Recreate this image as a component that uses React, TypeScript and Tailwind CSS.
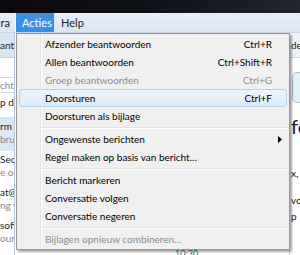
import { Fragment } from "react";

type Item = { label?: string; shortcut?: string; disabled?: boolean; active?: boolean; submenu?: boolean; sep?: boolean };

const items: Item[] = [
  { label: "Afzender beantwoorden", shortcut: "Ctrl+R" },
  { label: "Allen beantwoorden", shortcut: "Ctrl+Shift+R" },
  { label: "Groep beantwoorden", shortcut: "Ctrl+G", disabled: true },
  { label: "Doorsturen", shortcut: "Ctrl+F", active: true },
  { label: "Doorsturen als bijlage" },
  { sep: true },
  { label: "Ongewenste berichten", submenu: true },
  { label: "Regel maken op basis van bericht..." },
  { sep: true },
  { label: "Bericht markeren" },
  { label: "Conversatie volgen" },
  { label: "Conversatie negeren" },
  { sep: true },
  { label: "Bijlagen opnieuw combineren...", disabled: true },
];

const mails = [
  { from: "rm", sub: "brua", sel: true },
  { from: "Sec", sub: "e op" },
  { from: "at@", sub: "ng v" },
  { from: "soft", sub: "our" },
  { from: "t@", sub: "" },
];

const App = () => {
  return (
    <div className="relative w-[300px] h-[255px] overflow-hidden bg-white text-[10px] text-[#1a1a1a] font-['Lato',sans-serif]">
      {/* window title strip */}
      <div className="h-[13px] bg-gradient-to-r from-[#0a0a0e] via-[#101018] to-[#24242c]" />

      {/* menu bar */}
      <div className="h-[20px] flex bg-gradient-to-b from-[#e6eef8] to-[#dbe6f3] border-b border-[#c9d6e6] text-[11px]">
        <div className="w-[16px] overflow-hidden border-r border-[#f6f9fd] flex items-center justify-end pr-[5px] leading-none">ra</div>
        <div className="w-[38px] bg-[#3b8fe2] text-white flex items-center pl-[6px] leading-none">Acties</div>
        <div className="flex items-center pl-[7px] leading-none">Help</div>
      </div>

      {/* page body under the menu */}
      <div className="flex h-[222px]">
        <div className="w-[15px] border-r border-[#b7c7da] overflow-hidden whitespace-nowrap">
          <div className="h-[25px] bg-[#dbe6f3] border-b border-[#c3d2e4] flex items-center">antwoorden</div>
          <div className="h-[19px]" />
          <div className="h-[16px] border-y border-[#cfd9e6] flex items-center text-[#8a8a8a]">cht</div>
          <div className="h-[18px] flex items-center">p datum</div>
          <div className="h-[7px] border-b border-[#d6dde6]" />
          {mails.map((m, i) => (
            <div key={i} className={`h-[33px] flex flex-col pt-[2px] leading-[13px] ${m.sel ? "bg-[#dde8f5]" : ""}`}>
              <div>{m.from}</div>
              <div className="text-[#8a8a8a]">{m.sub}</div>
            </div>
          ))}
        </div>
        <div className="flex-1 relative">
          <div className="absolute left-[160px] bottom-[-5px] text-[9px] text-[#666]">10:30</div>
        </div>
        <div className="w-[11px] border-l border-[#c6d1de] overflow-hidden whitespace-nowrap">
          <div className="h-[25px] bg-[#eef3f9] border-b border-[#cdd8e5] flex items-center pl-[1px]">de</div>
          <div className="h-[14px]" />
          <div className="ml-[2px] h-[31px] w-[20px] rounded-[5px] border border-[#9fc2d8] bg-[#e4eff6]" />
          <div className="text-[20px] leading-[28px] pl-[1px] mt-[9px]">fe</div>
          <div className="mt-[25px] pl-[1px] leading-[16px]">x,</div>
          <div className="mt-[11px] pl-[1px] leading-[16px]">vo</div>
          <div className="pl-[1px] leading-[16px]">p</div>
        </div>
      </div>

      {/* dropdown */}
      <div className="absolute left-[16px] top-[33px] w-[274px] border border-[#979797] bg-[#f0f0f0] py-[1px] shadow-[2px_2px_2px_rgba(0,0,0,0.35)]">
        <div className="absolute left-[23px] top-0 bottom-0 w-px bg-[#e2e3e3]" />
        <div className="absolute left-[24px] top-0 bottom-0 w-px bg-white" />
        {items.map((it, i) =>
          it.sep ? (
            <div key={i} className="h-[5px] flex flex-col justify-center pl-[25px] pr-[1px]">
              <div className="h-px bg-[#e0e0e0]" />
              <div className="h-px bg-white" />
            </div>
          ) : (
            <Fragment key={i}>
              <div
                className={`relative h-[18px] mx-[2px] flex items-center pl-[25px] pr-[14px] rounded-[3px] border ${
                  it.active ? "border-[#b3d3ea] bg-gradient-to-b from-[#eef5fb] to-[#dcebf7]" : "border-transparent"
                } ${it.disabled ? "text-[#8d8d8d]" : "text-black"}`}
              >
                <span className="flex-1 whitespace-nowrap">{it.label}</span>
                {it.shortcut && <span className="whitespace-nowrap">{it.shortcut}</span>}
                {it.submenu && (
                  <svg width="4" height="7" viewBox="0 0 4 7" className="mr-[-10px]">
                    <path d="M0 0 L4 3.5 L0 7 Z" fill="#000" />
                  </svg>
                )}
              </div>
            </Fragment>
          )
        )}
      </div>
    </div>
  );
};

export default App;
